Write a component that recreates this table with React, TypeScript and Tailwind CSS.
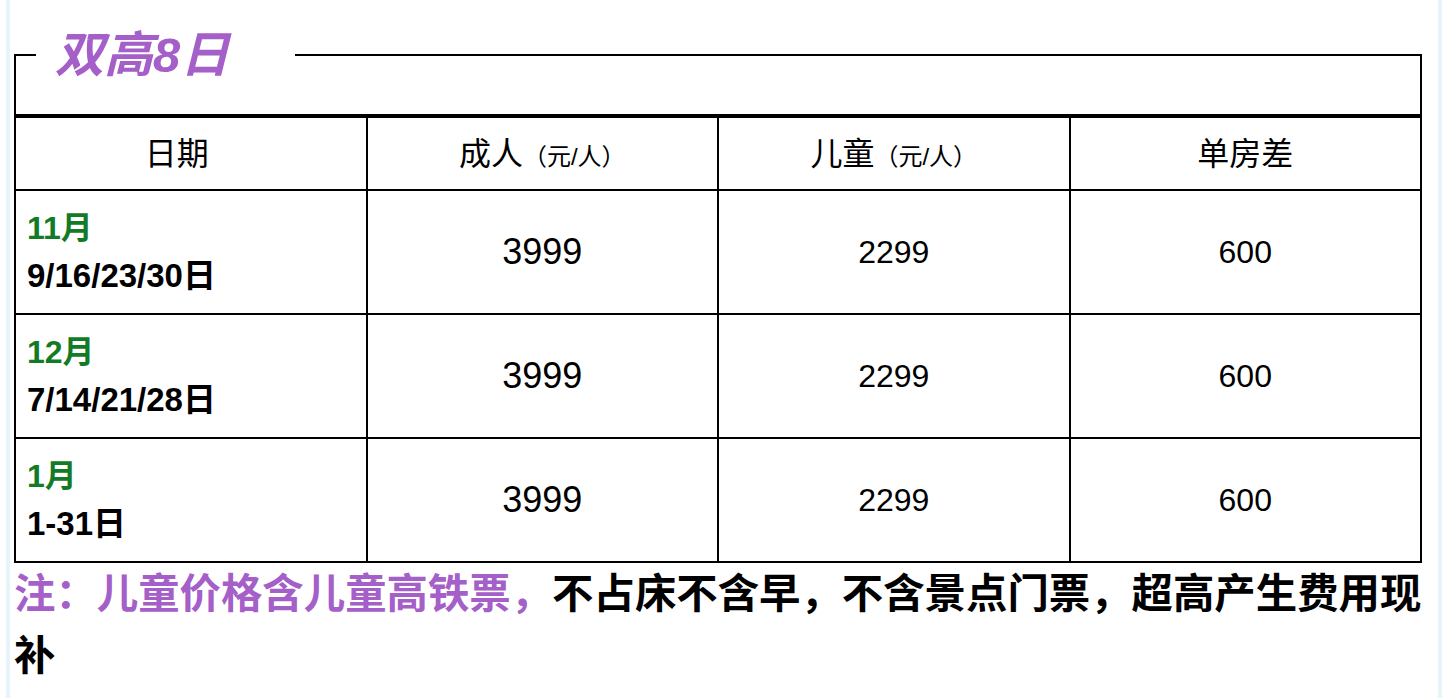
const FONT = "font-['Liberation_Sans','Noto_Sans_CJK_SC',sans-serif]";

const rows = [
  { month: '11月', days: '9/16/23/30日' },
  { month: '12月', days: '7/14/21/28日' },
  { month: '1月', days: '1-31日' },
];

export default function App() {
  return (
    <div className={`${FONT} bg-white min-h-[698px]`}>
      <div className="ml-[6px] w-[1436px] min-h-[698px] border-x-4 border-[#e8f4fc] pl-[4px] pr-[16px] pt-[31px]">
        <fieldset className="border-2 border-black">
          <legend className="ml-[20px] w-[259px] pl-[19px] text-[49px] leading-[48px] font-bold italic text-[#a55fc8]">
            双高8日
          </legend>
          <div className="h-[35px]" />
        </fieldset>

        <table className="w-full table-fixed border-collapse border-2 border-black text-black">
          <thead>
            <tr className="h-[73px]">
              <th className="border-2 border-black text-[32px] font-normal pr-[28px]">日期</th>
              <th className="border-2 border-black text-[32px] font-normal">
                成人<span className="text-[24px]">（元/人）</span>
              </th>
              <th className="border-2 border-black text-[32px] font-normal">
                儿童<span className="text-[24px]">（元/人）</span>
              </th>
              <th className="border-2 border-black text-[32px] font-normal">单房差</th>
            </tr>
          </thead>
          <tbody>
            {rows.map((r) => (
              <tr key={r.month} className="h-[124px]">
                <td className="border-2 border-black pl-[11px] font-bold">
                  <p className="text-[32px] leading-[48px] text-[#137a25]">{r.month}</p>
                  <p className="text-[33px] leading-[48px]">{r.days}</p>
                </td>
                <td className="border-2 border-black text-center text-[36px]">3999</td>
                <td className="border-2 border-black text-center text-[32px]">2299</td>
                <td className="border-2 border-black text-center text-[32px]">600</td>
              </tr>
            ))}
          </tbody>
        </table>

        <p className="text-[41.4px] leading-[62px] font-bold">
          <span className="text-[#a55fc8]">注：儿童价格含儿童高铁票，</span>
          <span className="text-black">不占床不含早，不含景点门票，超高产生费用现补</span>
        </p>
      </div>
    </div>
  );
}
